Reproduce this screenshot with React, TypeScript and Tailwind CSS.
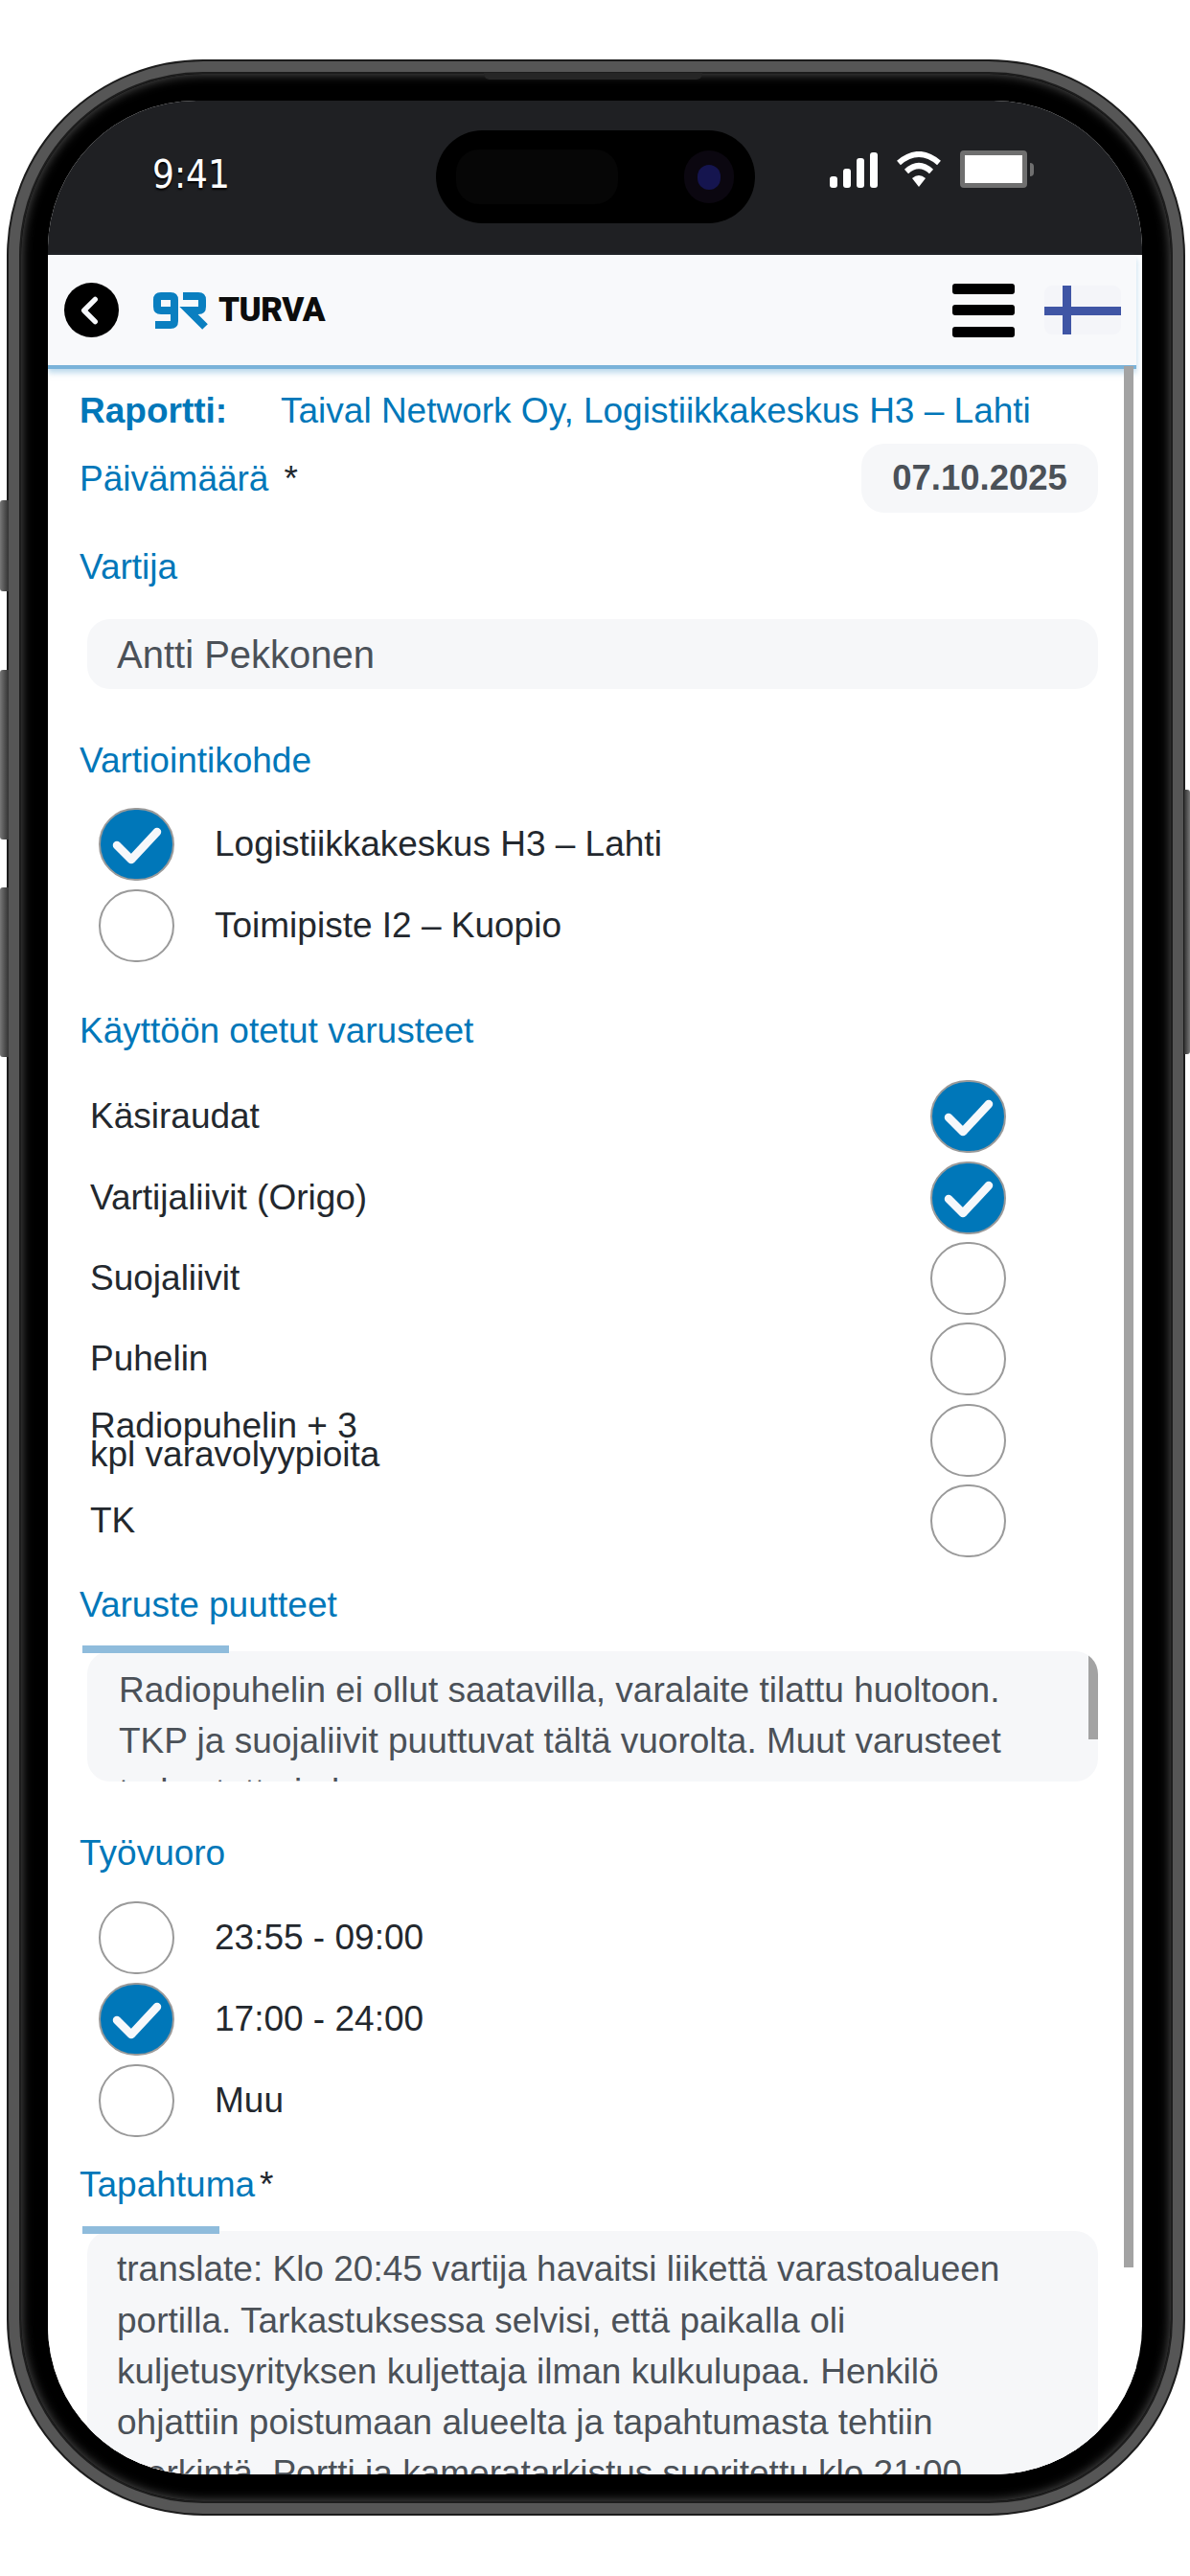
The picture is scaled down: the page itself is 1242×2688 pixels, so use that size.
import React from 'react'

const font = { fontFamily: '"Liberation Sans", Arial, sans-serif' }

const Check = () => (
  <svg viewBox="0 0 75 72" className="h-full w-full">
    <path d="M17 37 L32 52 L59 23" fill="none" stroke="#f6f8fb" strokeWidth="8.5" strokeLinecap="round" strokeLinejoin="round" />
  </svg>
)

const Circle = ({ on }: { on?: boolean }) => (
  <div
    className={`h-[76px] w-[79px] shrink-0 rounded-full border-[2px] border-[#9a9a9a] ${on ? 'bg-[#0077b9]' : 'bg-white'}`}
  >
    {on && <Check />}
  </div>
)

const Label = ({ children, className }: { children: React.ReactNode; className?: string }) => (
  <div className={`flex h-[50px] items-center text-[#0077b9] ${className ? className : ''}`}>{children}</div>
)

const Radio = ({ on, text }: { on?: boolean; text: string }) => (
  <div className="ml-[20px] flex h-[85px] items-center gap-[42px] text-[#23282e]">
    <Circle on={on} />
    <span>{text}</span>
  </div>
)

const CheckRow = ({ on, children }: { on?: boolean; children: React.ReactNode }) => (
  <div className="flex h-[84.4px] items-center justify-between pl-[11px] pr-[96px] text-[#23282e]">
    <span className="leading-[30px]">{children}</span>
    <Circle on={on} />
  </div>
)

const SideButton = ({ className }: { className: string }) => (
  <div className={`absolute w-[9px] rounded-l-[3px] bg-gradient-to-r from-[#777] to-[#333] ${className}`}></div>
)

const StatusIcons = () => (
  <div className="flex items-center gap-[19px]">
    <div className="flex h-[38px] items-end gap-[6px]">
      <div className="h-[12px] w-[8px] rounded-[3px] bg-white"></div>
      <div className="h-[20px] w-[8px] rounded-[3px] bg-white"></div>
      <div className="h-[31px] w-[8px] rounded-[3px] bg-white"></div>
      <div className="h-[37px] w-[8px] rounded-[3px] bg-white"></div>
    </div>
    <svg viewBox="0 0 48 38" className="h-[38px] w-[48px]">
      <path d="M3 12 Q24 -6 45 12" fill="none" stroke="#fff" strokeWidth="6" strokeLinejoin="round" />
      <path d="M11 21 Q24 9 37 21" fill="none" stroke="#fff" strokeWidth="6" />
      <path d="M17 28 Q24 22 31 28 L24 37 Z" fill="#fff" />
    </svg>
    <div className="flex items-center gap-[3px]">
      <div className="h-[39px] w-[70px] rounded-[4px] border-[5px] border-[#6f6f6f] bg-white"></div>
      <div className="h-[14px] w-[4px] rounded-r-full bg-[#6f6f6f]"></div>
    </div>
  </div>
)

const Logo = () => (
  <div className="flex items-center gap-[9px]">
    <svg viewBox="0 0 60 40" className="h-[40px] w-[60px]">
      <path
        d="M23 20 H9 Q5 20 5 16 V9 Q5 5 9 5 H19 Q23 5 23 9 V31 Q23 35 19 35 H3"
        fill="none"
        stroke="#0a7fc0"
        strokeWidth="8"
      />
      <path d="M32 5 H48 Q52 5 52 9 V16 Q52 20 48 20 H38 L55 37" fill="none" stroke="#0a7fc0" strokeWidth="8" />
    </svg>
    <span className="text-[35px] font-black leading-none tracking-[-0.5px] text-[#0c0c0c]" style={{ fontFamily: 'Roboto, sans-serif' }}>
      TURVA
    </span>
  </div>
)

export default function App() {
  return (
    <div className="relative h-[2688px] w-[1242px] overflow-hidden bg-white pl-[7px] pt-[62px]" style={font}>
      <SideButton className="left-0 top-[522px] h-[95px]" />
      <SideButton className="left-0 top-[699px] h-[177px]" />
      <SideButton className="left-0 top-[926px] h-[177px]" />
      <div className="absolute right-0 top-[824px] h-[276px] w-[6px] rounded-r-[3px] bg-gradient-to-l from-[#777] to-[#333]"></div>

      <div className="h-[2563px] w-[1230px] rounded-[205px] border-[2px] border-[#1c1c1c] bg-[#565656] p-[11px]">
        <div className="relative h-full w-full rounded-[192px] border-[2px] border-[#1d1d1d] bg-black py-[28px] pl-[28px] pr-[30px] shadow-[inset_0_0_12px_#5a5a5a]">
          <div className="absolute left-[483px] top-[-1px] h-[7px] w-[228px] rounded-b-[6px] bg-[#262626]"></div>

          <div className="flex h-full flex-col overflow-hidden rounded-[155px] bg-white">
            {/* status bar */}
            <div className="relative flex h-[161px] shrink-0 items-start justify-between bg-[#1f2023] pl-[109px] pr-[113px] pt-[52px]">
              <span
                className="mt-[6px] text-[40px] leading-[38px] text-white [font-stretch:condensed] [text-shadow:0_2px_2px_#000]"
                style={{ fontFamily: '"DejaVu Sans", sans-serif' }}
              >
                9:41
              </span>
              <div className="absolute left-[405px] top-[31px] flex h-[97px] w-[333px] items-center justify-between rounded-full bg-black pl-[21px] pr-[22px]">
                <div className="h-[57px] w-[169px] rounded-[24px] bg-[#060606]"></div>
                <div className="flex h-[55px] w-[52px] items-center justify-center rounded-full bg-[#0b0710]">
                  <div className="h-[26px] w-[24px] rounded-full bg-[#15154f]"></div>
                </div>
              </div>
              <StatusIcons />
            </div>

            <div className="relative mr-[6px] flex-1 bg-white text-[37px] leading-none">
              {/* app header */}
              <div className="flex h-[119px] items-center justify-between border-b-[4px] border-[#7ab3d9] bg-[#f8f9fb] pl-[17px] pr-[16px] shadow-[0_4px_6px_rgba(122,179,217,0.5)]">
                <div className="flex items-center gap-[35px]">
                  <div className="flex h-[57px] w-[57px] items-center justify-center rounded-full bg-black">
                    <svg viewBox="0 0 24 24" className="h-[40px] w-[40px]">
                      <path d="M14 5 L7 12 L14 19" fill="none" stroke="#f6f8fb" strokeWidth="3.2" strokeLinecap="round" strokeLinejoin="round" />
                    </svg>
                  </div>
                  <Logo />
                </div>
                <div className="flex items-center gap-[31px]">
                  <div className="flex h-[56px] w-[65px] flex-col justify-between">
                    <div className="h-[11px] rounded-[3px] bg-black"></div>
                    <div className="h-[11px] rounded-[3px] bg-black"></div>
                    <div className="h-[11px] rounded-[3px] bg-black"></div>
                  </div>
                  <svg viewBox="0 0 80 51" className="h-[51px] w-[80px] rounded-[8px] bg-[#f4f5f9]">
                    <rect x="19" y="0" width="9" height="51" fill="#3f55a5" />
                    <rect x="0" y="22" width="80" height="9" fill="#3f55a5" />
                  </svg>
                </div>
              </div>

              {/* scrollbar */}
              <div className="absolute right-[3px] top-[116px] h-[1984px] w-[10px] bg-[#a3a3a3]"></div>

              <div className="pl-[33px] pr-[40px] pt-[13px]">
                <div className="flex h-[60px] items-center text-[#0077b9]">
                  <span className="w-[210px] font-bold">Raportti:</span>
                  <span>Taival Network Oy, Logistiikkakeskus H3 – Lahti</span>
                </div>

                <div className="mt-[5px] flex items-center justify-between">
                  <div className="flex items-center gap-[16px]">
                    <span className="text-[#0077b9]">Päivämäärä</span>
                    <span className="text-[#23282e]">*</span>
                  </div>
                  <div className="flex h-[72px] w-[247px] items-center justify-center rounded-[24px] bg-[#f6f7f9] text-[36.5px] font-bold text-[#4b5158]">
                    07.10.2025
                  </div>
                </div>

                <Label className="mt-[31px]">Vartija</Label>
                <div className="ml-[8px] mt-[30px] flex h-[73px] items-center rounded-[24px] bg-[#f6f7f9] pl-[31px] text-[40px] text-[#4b5158]">
                  Antti Pekkonen
                </div>

                <Label className="mt-[49px]">Vartiointikohde</Label>
                <div className="mt-[20px]">
                  <Radio on text="Logistiikkakeskus H3 – Lahti" />
                  <Radio text="Toimipiste I2 – Kuopio" />
                </div>

                <Label className="mt-[42px]">Käyttöön otetut varusteet</Label>
                <div className="mt-[23px]">
                  <CheckRow on>Käsiraudat</CheckRow>
                  <CheckRow on>Vartijaliivit (Origo)</CheckRow>
                  <CheckRow>Suojaliivit</CheckRow>
                  <CheckRow>Puhelin</CheckRow>
                  <CheckRow>
                    Radiopuhelin + 3
                    <br />
                    kpl varavolyypioita
                  </CheckRow>
                  <CheckRow>TK</CheckRow>
                </div>

                <Label className="mt-[20px]">Varuste puutteet</Label>
                <div className="relative z-10 ml-[3px] mt-[18px] h-[8px] w-[153px] bg-[#8fbcdc]"></div>
                <div className="relative ml-[8px] mt-[-2px] h-[136px] overflow-hidden rounded-[24px] bg-[#f6f7f9] pl-[33px] pr-[62px] pt-[14px] leading-[53px] text-[#4b5158]">
                  Radiopuhelin ei ollut saatavilla, varalaite tilattu huoltoon. TKP ja suojaliivit puuttuvat tältä vuorolta. Muut varusteet
                  tarkastettu ja kunnossa.
                  <div className="absolute right-0 top-0 h-[92px] w-[10px] bg-[#a3a3a3]"></div>
                </div>

                <Label className="mt-[49px]">Työvuoro</Label>
                <div className="mt-[21px]">
                  <Radio text="23:55 - 09:00" />
                  <Radio on text="17:00 - 24:00" />
                  <Radio text="Muu" />
                </div>

                <Label className="mt-[20px]">
                  <span>Tapahtuma</span>
                  <span className="ml-[5px] text-[#23282e]">*</span>
                </Label>
                <div className="relative z-10 ml-[3px] mt-[19px] h-[8px] w-[143px] bg-[#8fbcdc]"></div>
                <div className="ml-[8px] mt-[-3px] rounded-[24px] bg-[#f6f7f9] pl-[31px] pr-[62px] pt-[13px] leading-[53.2px] text-[#4b5158]">
                  translate: Klo 20:45 vartija havaitsi liikettä varastoalueen portilla. Tarkastuksessa selvisi, että paikalla oli
                  kuljetusyrityksen kuljettaja ilman kulkulupaa. Henkilö ohjattiin poistumaan alueelta ja tapahtumasta tehtiin merkintä.
                  Portti ja kameratarkistus suoritettu klo 21:00.
                </div>
              </div>
            </div>
          </div>
        </div>
      </div>
    </div>
  )
}
